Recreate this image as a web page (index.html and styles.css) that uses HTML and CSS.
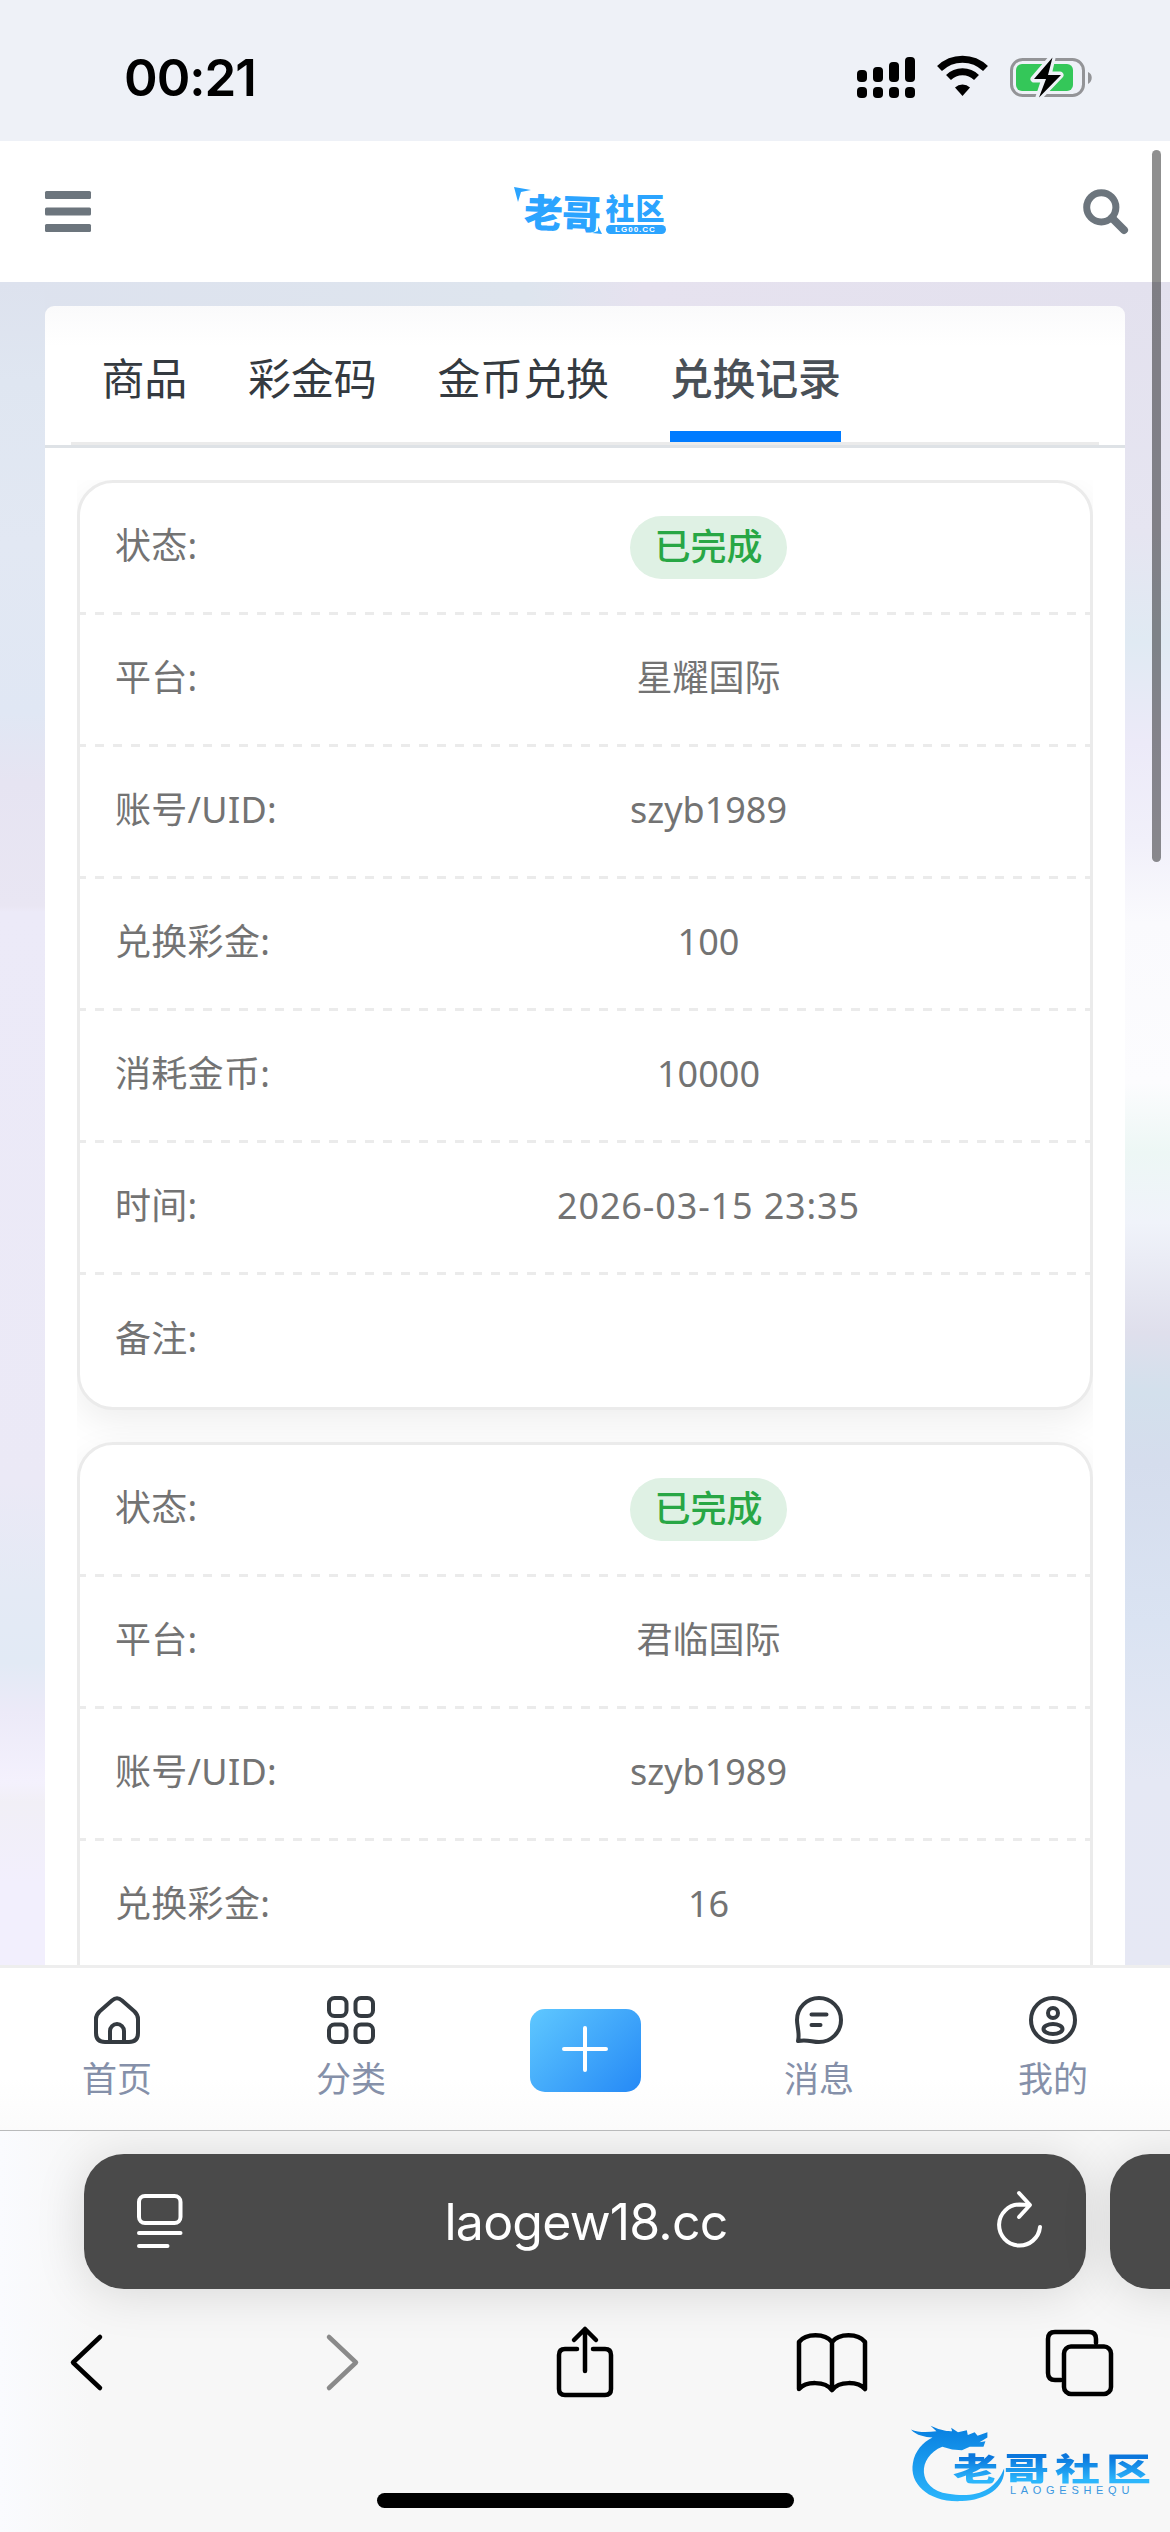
FILE: index.html
```
<!DOCTYPE html>
<html lang="zh-CN">
<head>
	<meta charset="UTF-8">
	<title>兑换记录</title>
	<link rel="stylesheet" href="styles.css">
</head>
<body>
	<div class="status">
		<span class="time">00:21</span>
		<svg class="signs" width="236" height="44" viewBox="0 0 236 44">
			<g>
				<rect x="0" y="14" width="10" height="12" rx="4"/>
				<rect x="16" y="11" width="10" height="15" rx="4"/>
				<rect x="32" y="6" width="10" height="20" rx="4"/>
				<rect x="48" y="1" width="10" height="25" rx="4"/>
				<rect x="0" y="31" width="10" height="11" rx="4"/>
				<rect x="16" y="31" width="10" height="11" rx="4"/>
				<rect x="32" y="31" width="10" height="11" rx="4"/>
				<rect x="48" y="31" width="10" height="11" rx="4"/>
			</g>
			<g fill="none" stroke="#000" stroke-width="7">
				<path d="M82.500 12.500a33 33 0 0 1 46 0"/>
				<path d="M91.500 21.500a20 20 0 0 1 28 0"/>
			</g>
			<path d="M98 31.500a11 11 0 0 1 15 0L105.500 40z"/>
			<rect x="154.500" y="3.500" width="72" height="36" rx="11" fill="none" stroke="#939497" stroke-width="3"/>
			<path d="M231 16c5 2 5 9 0 12z" fill="#939497"/>
			<rect x="159" y="8" width="57" height="27" rx="6" fill="#34c759"/>
			<path d="M195 2L177 23h11l-6 18 21-22h-12z" stroke="#eef1f7" stroke-width="7" stroke-linejoin="round" fill="#eef1f7"/>
			<path d="M195.500 1.500L177 23h12l-7 18.500L204 19h-13z"/>
		</svg>
	</div>

	<header class="header">
		<svg width="46" height="42" viewBox="0 0 46 42" fill="#6c757d">
			<rect y="0" width="46" height="8" rx="1.500"/>
			<rect y="16.500" width="46" height="8" rx="1.500"/>
			<rect y="33" width="46" height="8" rx="1.500"/>
		</svg>
		<div class="logo">
			<svg class="corner" width="17" height="16" viewBox="0 0 17 16"><path d="M0 0L17 3 7 5 4 15z"/></svg>
			<span class="logo-a">老哥</span>
			<div class="logo-r">
				<span class="logo-b">社区</span>
				<span class="logo-c">LG00.CC</span>
			</div>
			<svg class="corner2" width="10" height="8" viewBox="0 0 10 8"><path d="M6 0L10 8 0 7 6 5z"/></svg>
		</div>
		<svg width="45" height="45" viewBox="0 0 45 45" fill="none" stroke="#6c757d">
			<circle cx="18.300" cy="18.300" r="14.600" stroke-width="7"/>
			<path d="M29 29l12 12" stroke-width="8" stroke-linecap="round"/>
		</svg>
	</header>

	<main class="main">
		<div class="panel">
			<nav class="tabs">
				<a class="tab">商品</a>
				<a class="tab">彩金码</a>
				<a class="tab">金币兑换</a>
				<a class="tab active">兑换记录</a>
			</nav>
			<div class="list">
				<div class="card">
					<div class="row"><span class="name">状态:</span><span class="val"><b class="pill">已完成</b></span></div>
					<div class="row"><span class="name">平台:</span><span class="val">星耀国际</span></div>
					<div class="row"><span class="name">账号/UID:</span><span class="val">szyb1989</span></div>
					<div class="row"><span class="name">兑换彩金:</span><span class="val">100</span></div>
					<div class="row"><span class="name">消耗金币:</span><span class="val">10000</span></div>
					<div class="row"><span class="name">时间:</span><span class="val date">2026-03-15 23:35</span></div>
					<div class="row last"><span class="name">备注:</span><span class="val"></span></div>
				</div>
				<div class="card more">
					<div class="row"><span class="name">状态:</span><span class="val"><b class="pill">已完成</b></span></div>
					<div class="row"><span class="name">平台:</span><span class="val">君临国际</span></div>
					<div class="row"><span class="name">账号/UID:</span><span class="val">szyb1989</span></div>
					<div class="row"><span class="name">兑换彩金:</span><span class="val">16</span></div>
				</div>
			</div>
		</div>
	</main>

	<nav class="nav">
		<a class="item">
			<svg width="48" height="48" viewBox="0 0 48 48">
				<path d="M19 4.500L6.500 15.500Q3 19 3 23V37Q3 46 12 46H36Q45 46 45 37V23Q45 19 41.500 15.500L29 4.500Q24 0 19 4.500z"/>
				<path d="M17 45V35a7 7 0 0 1 14 0V45"/>
			</svg>
			<span>首页</span>
		</a>
		<a class="item">
			<svg width="48" height="48" viewBox="0 0 48 48">
				<rect x="2" y="2" width="17.500" height="18" rx="5.500"/>
				<rect x="28.500" y="2" width="17.500" height="18" rx="5.500"/>
				<rect x="2" y="28.500" width="17.500" height="17.500" rx="5.500"/>
				<rect x="28.500" y="28.500" width="17.500" height="17.500" rx="5.500"/>
			</svg>
			<span>分类</span>
		</a>
		<a class="item">
			<span class="add">
				<svg class="plus" width="50" height="50" viewBox="0 0 50 50"><path d="M25 4V46M4 25H46"/></svg>
			</span>
		</a>
		<a class="item">
			<svg width="48" height="48" viewBox="0 0 48 48">
				<path d="M3 45C5 38 2 31 2 24A22 22 0 1 1 24 46C17 46 12 43 3 45z"/>
				<path d="M16.500 18.500H31.500M16.500 29H25.500"/>
			</svg>
			<span>消息</span>
		</a>
		<a class="item">
			<svg width="48" height="48" viewBox="0 0 48 48">
				<circle cx="24" cy="24" r="22"/>
				<circle cx="24" cy="17" r="5"/>
				<ellipse cx="24" cy="33" rx="9.500" ry="5"/>
			</svg>
			<span>我的</span>
		</a>
	</nav>

	<footer class="browser">
		<div class="bars">
			<div class="url">
				<svg width="46" height="56" viewBox="0 0 46 56">
					<rect x="2" y="2" width="41.500" height="27" rx="6"/>
					<path d="M2 39H43.500M2 52H30.500"/>
				</svg>
				<span>laogew18.cc</span>
				<svg width="46" height="62" viewBox="0 0 46 62">
					<path d="M43 36A20.500 20.500 0 1 1 22.500 13.500L32 14"/>
					<path d="M22 2L33 14 22 26"/>
				</svg>
			</div>
			<div class="url next"></div>
		</div>
		<div class="tools">
			<svg width="34" height="72" viewBox="0 0 34 72"><path d="M30 11L3 36.500 30 62"/></svg>
			<svg class="off" width="34" height="72" viewBox="0 0 34 72"><path d="M4 11L31 36.500 4 62"/></svg>
			<svg width="58" height="72" viewBox="0 0 58 72">
				<path d="M21 23H9Q3 23 3 29V63Q3 69 9 69H49Q55 69 55 63V29Q55 23 49 23H37M29 45V3M18 14L29 3 40 14"/>
			</svg>
			<svg width="72" height="72" viewBox="0 0 72 72">
				<path d="M36 16C29 7 10 7 3 16V63C10 55 29 55 36 64C43 55 62 55 69 63V16C62 7 43 7 36 16V64"/>
			</svg>
			<svg width="68" height="72" viewBox="0 0 68 72">
				<path d="M15 54H9Q2 54 2 47V13Q2 6 9 6H43Q50 6 50 13V17"/>
				<rect x="18" y="20.500" width="47" height="47.500" rx="7"/>
			</svg>
		</div>
		<div class="home"></div>
	</footer>

	<div class="scroll"></div>
	<div class="mark">
		<svg width="98" height="78" viewBox="0 0 100 86" preserveAspectRatio="none">
			<defs>
				<linearGradient id="ring" x1="0" y1="0" x2="0" y2="1">
					<stop offset="0" stop-color="#087fe0"/>
					<stop offset="1" stop-color="#2cb6fc"/>
				</linearGradient>
			</defs>
			<path fill="url(#ring)" d="M2 6C10 10 20 9 28 8L22 2C34 8 40 8 44 8L43 4 50 9 59 7 60 12 67 9 70 13 80 9 80 15 72 20 78 19 76 25 62 25 54 29 44 28 34 25C8 36 8 72 40 77C68 82 88 74 97 49C99 70 78 84 54 85C20 87 0 66 4 43C6 30 14 20 24 15 16 14 8 13 2 6z"/>
		</svg>
		<div class="mark-txt">
			<b>老哥社区</b>
			<span>LAOGESHEQU</span>
		</div>
	</div>
</body>
</html>
```

FILE: styles.css
```
* {
	box-sizing: border-box;
}
body {
	margin: 0;
	width: 1170px;
	height: 2532px;
	overflow: hidden;
	position: relative;
	display: flex;
	flex-direction: column;
	font-family: "Noto Sans", "Noto Sans CJK SC", sans-serif;
	background: #fff;
}
svg {
	display: block;
	flex: none;
	overflow: visible;
}

.status {
	height: 141px;
	flex: none;
	padding: 14px 77px 0 124px;
	display: flex;
	align-items: center;
	justify-content: space-between;
	background: #eef1f7;
}
.time {
	font: 600 51px/60px Inter, sans-serif;
	letter-spacing: -1px;
}

.header {
	height: 141px;
	flex: none;
	padding: 0 42px 0 45px;
	display: flex;
	align-items: center;
	justify-content: space-between;
	background: #fff;
}
.logo {
	position: relative;
	width: 156px;
	height: 50px;
	margin-left: 9px;
	display: flex;
	gap: 6px;
	padding: 5px 0 0 10px;
	color: #2ba4ff;
	fill: #2ba4ff;
	font-family: "Noto Sans CJK SC", sans-serif;
	font-weight: 900;
}
.logo-a {
	font-size: 39px;
	line-height: 38px;
	letter-spacing: -1px;
	transform: rotate(2deg);
}
.logo-r {
	display: flex;
	flex-direction: column;
	gap: 2px;
}
.logo-b {
	font-size: 29px;
	line-height: 31px;
	letter-spacing: 1px;
}
.logo-c {
	width: 60px;
	height: 9px;
	border-radius: 5px;
	background: #2ba4ff;
	color: #fff;
	font: bold 8px/9px "Liberation Sans", sans-serif;
	letter-spacing: 1px;
	text-align: center;
}
.corner {
	position: absolute;
	left: 0;
	top: 0;
}
.corner2 {
	position: absolute;
	left: 78px;
	top: 39px;
}

.main {
	height: 1683px;
	flex: none;
	overflow: hidden;
	padding: 24px 45px 0;
	background:
		linear-gradient(#dde2ee 0, #dfe6f1 100px, #e2e8f3 260px, #e0e7f4 430px, #e6e4f2 500px, #e9e6f3 624px, #eceaf8 630px, #ebe9f6 1200px, #e4eaf5 1310px, #e2eaf5 1380px, #eceaf8 1430px, #f4f1fd 1500px, #f1eff6 1520px, #f2effd 1600px) 0 0 / 45px 100% no-repeat,
		linear-gradient(#e3e1ee 0, #e6e5f1 250px, #e0eaf3 360px, #eceaf8 460px, #f1f0fa 560px, #fafafd 640px, #fcfcfe 800px, #edf7f5 870px, #f0f3fa 940px, #dfdfec 1050px, #d3e0ec 1110px, #d5dded 1180px, #dae3f2 1340px, #e5e8f4 1500px, #e6e8f4 100%) 1125px 0 / 45px 100% no-repeat,
		linear-gradient(90deg, #dde2ee, #dee5ee 45%, #e6e2ef 55%, #e3e1ee);
}
.panel {
	height: 1800px;
	border-radius: 9px 9px 0 0;
	background: linear-gradient(#fafafb, #fff 40px);
}
.tabs {
	height: 142px;
	border-bottom: 3px solid #dee2e6;
	padding: 0 26px;
	display: flex;
	background: linear-gradient(#ebebeb, #ebebeb) 26px 136px / 1028px 3px no-repeat;
}
.tab {
	height: 136px;
	margin: 0 30.500px;
	padding-top: 38px;
	color: #343a40;
	font: 400 43px/64px "Noto Sans CJK SC", sans-serif;
	letter-spacing: -.2px;
	white-space: nowrap;
}
.tab.active {
	color: #495057;
	font-weight: 500;
	border-bottom: 11px solid #007bff;
}
.list {
	margin: 32px 32px 0;
	overflow: hidden;
}
.card {
	margin-bottom: 32px;
	border: 3px solid #ebebeb;
	border-radius: 36px;
	background: #fff;
	box-shadow: 0 12px 36px rgba(0, 0, 0, .07);
}
.card.more {
	height: 930px;
}
.row {
	height: 132px;
	padding: 0 36px 0 35px;
	display: flex;
	align-items: center;
	color: #737373;
	font-size: 36px;
	line-height: 54px;
	background: repeating-linear-gradient(90deg, #ebebeb 0 9px, transparent 9px 18px) -3px 129px / 1026px 3px no-repeat;
}
.row.last {
	background: none;
	padding-top: 2px;
}
.name {
	flex: 0 0 248px;
	padding-bottom: 6px;
	letter-spacing: .3px;
}
.val {
	flex: 1;
	padding-bottom: 6px;
	text-align: center;
}
.date {
	letter-spacing: .85px;
}
.pill {
	display: inline-block;
	height: 63px;
	margin-top: 3px;
	padding: 0 24.500px;
	border-radius: 32px;
	background: #dff1e4;
	color: #28a745;
	font-weight: 500;
	font-family: "Noto Sans CJK SC", sans-serif;
	line-height: 57px;
	vertical-align: middle;
}

.nav {
	height: 165px;
	flex: none;
	border-top: 3px solid #eee;
	display: flex;
	background: linear-gradient(#fff 110px, #fbfbfb);
}
.item {
	flex: 1;
	padding-top: 28px;
	display: flex;
	flex-direction: column;
	align-items: center;
	color: #8590a9;
	font: 35px/54px "Noto Sans CJK SC", sans-serif;
}
.item svg {
	fill: none;
	stroke: #343a40;
	stroke-width: 4;
	stroke-linecap: round;
	stroke-linejoin: round;
	margin-bottom: 6px;
}
.item .add {
	width: 111px;
	height: 83px;
	margin-top: 13px;
	border-radius: 15px;
	display: flex;
	align-items: center;
	justify-content: center;
	background: linear-gradient(135deg, #5fc8ff, #2589f6);
}
.item .plus {
	stroke: #fff;
	margin: 0 0 3px;
}

.browser {
	flex: 1;
	border-top: 1px solid #b9babb;
	padding-top: 23px;
	overflow: hidden;
	display: flex;
	flex-direction: column;
	align-items: center;
	background: linear-gradient(90deg, #fafbfe, #f7f7f7 90px);
}
.bars {
	width: 1170px;
	padding-left: 84px;
	display: flex;
	gap: 24px;
}
.url {
	flex: 0 0 1002px;
	height: 135px;
	padding: 0 43px 0 53px;
	border-radius: 40px;
	display: flex;
	align-items: center;
	justify-content: space-between;
	background: #4a4a4a;
	color: #fff;
	font: 50px/60px Inter, sans-serif;
	letter-spacing: -.8px;
	box-shadow: 0 4px 50px rgba(0, 0, 0, .13);
}
.url span {
	margin-right: 8px;
}
.url svg,
.tools svg {
	fill: none;
	stroke: #fff;
	stroke-width: 4;
	stroke-linecap: round;
	stroke-linejoin: round;
}
.tools {
	width: 100%;
	padding: 37px 0 0 70px;
	display: grid;
	grid-template-columns: 255px 231px 240px 250px 1fr;
}
.tools svg {
	stroke: #000;
	stroke-width: 4.500;
}
.tools .off {
	stroke: #8a8a8a;
}
.home {
	width: 417px;
	height: 15px;
	margin-top: 95px;
	border-radius: 8px;
	background: #000;
}

.scroll {
	position: absolute;
	right: 9px;
	top: 150px;
	width: 9px;
	height: 712px;
	border-radius: 5px;
	background: rgba(0, 0, 0, .44);
}
.mark {
	position: absolute;
	left: 909px;
	top: 2424px;
}
.mark-txt {
	position: absolute;
	left: 44px;
	top: 20px;
	width: 210px;
}
.mark-txt b {
	display: block;
	font: 900 45px/46px "Noto Sans CJK SC", sans-serif;
	letter-spacing: 6px;
	white-space: nowrap;
	color: transparent;
	background: linear-gradient(#0a76dc 20%, #2cb6fc 90%);
	background-clip: text;
	-webkit-background-clip: text;
	transform: scaleY(.72);
}
.mark-txt span {
	display: block;
	margin: -6px 0 0 57px;
	color: #3b97e0;
	font: 11px/12px "Liberation Sans", sans-serif;
	letter-spacing: 4.700px;
}
```
